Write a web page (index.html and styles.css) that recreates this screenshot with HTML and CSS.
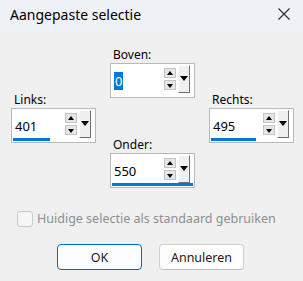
FILE: index.html
```html
<!DOCTYPE html>
<html>
<head>
    <title>Aangepaste selectie</title>
    <link rel="stylesheet" href="styles.css">
</head>
<body>
<div class="dialog">
    <div class="titlebar">
        <span class="title">Aangepaste selectie</span>
        <svg class="close" width="12" height="12" viewBox="0 0 12 12">
            <path d="M0.5 0.5 L11.5 11.5 M11.5 0.5 L0.5 11.5" stroke="#2b2b2b" stroke-width="1.1" fill="none"/>
        </svg>
    </div>

    <div class="fields">
        <div class="spin top">
            <div class="spin-label">Boven:</div>
            <div class="spin-box">
                <span class="spin-value"><span class="selected">0</span></span>
                <div class="spin-arrows"><span class="arrow up"></span><span class="arrow down"></span></div>
                <span class="spin-drop"></span>
            </div>
        </div>
        <div class="spin left">
            <div class="spin-label">Links:</div>
            <div class="spin-box">
                <span class="spin-value">401</span>
                <div class="spin-arrows"><span class="arrow up"></span><span class="arrow down"></span></div>
                <span class="spin-drop"></span>
                <span class="spin-bar" style="width: 37px;"></span>
            </div>
        </div>
        <div class="spin right">
            <div class="spin-label">Rechts:</div>
            <div class="spin-box">
                <span class="spin-value">495</span>
                <div class="spin-arrows"><span class="arrow up"></span><span class="arrow down"></span></div>
                <span class="spin-drop"></span>
                <span class="spin-bar" style="width: 45px;"></span>
            </div>
        </div>
        <div class="spin bottom">
            <div class="spin-label">Onder:</div>
            <div class="spin-box">
                <span class="spin-value">550</span>
                <div class="spin-arrows"><span class="arrow up"></span><span class="arrow down"></span></div>
                <span class="spin-drop"></span>
                <span class="spin-bar" style="width: 81px;"></span>
            </div>
        </div>
    </div>

    <label class="check">
        <span class="check-box"></span>
        <span class="check-text">Huidige selectie als standaard gebruiken</span>
    </label>

    <div class="buttons">
        <button class="btn btn-default">OK</button>
        <button class="btn">Annuleren</button>
    </div>
</div>
</body>
</html>
```

FILE: styles.css
```css
body {
    margin: 0;
    padding: 0;
    background-color: #f0f0f0;
    font-family: "Noto Sans", "Open Sans", sans-serif;
    color: #000000;
}
.dialog {
    width: 303px;
    height: 281px;
    background-color: #f0f0f0;
}
.titlebar {
    height: 32px;
    background-color: #eef2f6;
    display: flex;
    align-items: center;
    justify-content: space-between;
    padding: 0 13px 0 10px;
    box-sizing: border-box;
}
.title {
    font-size: 14px;
    color: #000000;
    margin-top: -3px;
}
.close {
    margin-top: -4px;
}
.fields {
    display: grid;
    grid-template-columns: 85px 85px 85px;
    grid-template-rows: 45px 45px 48px;
    column-gap: 14px;
    padding: 16px 0 0 11px;
}
.spin.top {
    grid-column: 2;
    grid-row: 1;
}
.spin.left {
    grid-column: 1;
    grid-row: 2;
}
.spin.right {
    grid-column: 3;
    grid-row: 2;
}
.spin.bottom {
    grid-column: 2;
    grid-row: 3;
}
.spin-label {
    font-size: 12px;
    line-height: 14px;
    padding-left: 3px;
    margin-bottom: 1px;
}
.spin-box {
    position: relative;
    display: flex;
    align-items: flex-start;
    height: 35px;
    box-sizing: border-box;
    border: 1px solid #b9b9b9;
    background-color: #ffffff;
}
.spin-value {
    flex: 1;
    font-size: 13px;
    line-height: 17px;
    padding: 9px 0 0 3px;
}
.selected {
    background-color: #0078d7;
    color: #ffffff;
    padding: 0 1px;
}
.spin-arrows {
    display: flex;
    flex-direction: column;
    gap: 2px;
    margin-top: 4px;
    margin-right: 2px;
}
.arrow {
    position: relative;
    width: 12px;
    height: 10px;
    box-sizing: border-box;
    background-color: #e6e6e6;
    border: 1px solid #c4c4c4;
}
.arrow::after {
    content: "";
    position: absolute;
    left: 2px;
    border-left: 3px solid transparent;
    border-right: 3px solid transparent;
}
.arrow.up::after {
    top: 2px;
    border-bottom: 4px solid #000000;
}
.arrow.down::after {
    top: 3px;
    border-top: 4px solid #000000;
}
.spin-drop {
    position: relative;
    width: 12px;
    height: 28px;
    box-sizing: border-box;
    margin-top: 1px;
    margin-right: 4px;
    background-color: #f0f0f0;
    border-top: 1px solid #ffffff;
    border-left: 1px solid #ffffff;
    border-right: 1px solid #6e6e6e;
    border-bottom: 1px solid #6e6e6e;
}
.spin-drop::after {
    content: "";
    position: absolute;
    left: 1px;
    top: 10px;
    border-left: 4px solid transparent;
    border-right: 4px solid transparent;
    border-top: 5px solid #000000;
}
.spin-bar {
    position: absolute;
    left: 1px;
    bottom: 1px;
    height: 3px;
    background-color: #0078d7;
}
.check {
    display: flex;
    align-items: center;
    gap: 4px;
    margin: 24px 0 0 17px;
}
.check-box {
    width: 16px;
    height: 16px;
    box-sizing: border-box;
    border: 1px solid #c9c9c9;
    border-radius: 3px;
    background-color: #f6f6f6;
}
.check-text {
    font-size: 12.5px;
    color: #8e8e8e;
}
.buttons {
    display: flex;
    justify-content: center;
    gap: 17px;
    margin-top: 17px;
    padding-right: 2px;
}
.btn {
    width: 85px;
    height: 26px;
    font-family: "Noto Sans", "Open Sans", sans-serif;
    font-size: 12.5px;
    color: #1a1a1a;
    background-color: #fdfdfd;
    border: 1px solid #d0d0d0;
    border-bottom-color: #bdbdbd;
    border-radius: 4px;
    padding: 0;
}
.btn-default {
    border: 1px solid #0067c0;
}
```
